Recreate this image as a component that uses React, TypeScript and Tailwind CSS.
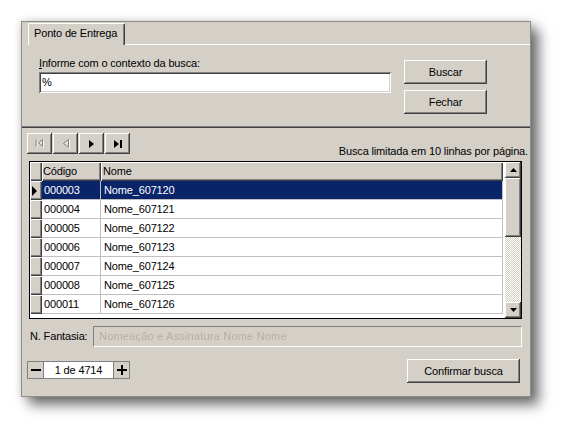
const raised =
  "shadow-[inset_-1px_-1px_#404040,inset_1px_1px_#ffffff,inset_-2px_-2px_#808080,inset_2px_2px_#d4d0c8]";
const sunken =
  "shadow-[inset_1px_1px_#808080,inset_-1px_-1px_#ffffff,inset_2px_2px_#404040,inset_-2px_-2px_#d4d0c8]";
const headCell = "shadow-[inset_1px_1px_#ffffff,inset_-1px_-1px_#404040,inset_-2px_-2px_#808080]";

const rows = [
  ["000003", "Nome_607120"],
  ["000004", "Nome_607121"],
  ["000005", "Nome_607122"],
  ["000006", "Nome_607123"],
  ["000007", "Nome_607124"],
  ["000008", "Nome_607125"],
  ["000011", "Nome_607126"],
];

function NavButton({ children }: { children: React.ReactNode }) {
  return (
    <div className={`w-[25px] h-[21px] bg-[#d4d0c8] flex items-center justify-center ${raised}`}>
      {children}
    </div>
  );
}

function Button({ label, w }: { label: string; w: string }) {
  return (
    <div className={`${w} h-[24px] bg-[#d4d0c8] flex items-center justify-center ${raised}`}>{label}</div>
  );
}

export default function App() {
  return (
    <div className="w-[572px] h-[439px] bg-white pl-[21px] pt-[21px] font-['Liberation_Sans',Arial,sans-serif] text-[11px] leading-[13px] tracking-[-0.15px] text-black">
      <div className="w-[510px] h-[376px] bg-[#d4d0c8] border border-[#8f8c86] flex flex-col shadow-[8px_8px_12px_rgba(0,0,0,0.55),0_0_8px_rgba(0,0,0,0.18)]">
        {/* tab strip */}
        <div className="h-[23px] flex items-end">
          <div className="w-[6px]" />
          <div className="w-[97px] h-[22px] border-l border-t border-r border-white border-r-[#404040] rounded-tl-[2px] rounded-tr-[2px] shadow-[inset_-1px_0_#808080] pl-[5px] pt-[3px]">
            Ponto de Entrega
          </div>
          <div className="flex-1 h-[1px] bg-white" />
        </div>

        {/* search panel */}
        <div className="h-[81px] flex pl-[17px]">
          <div className="w-[352px] pt-[12px]">
            <div>
              <u>I</u>nforme com o contexto da busca:
            </div>
            <div className={`mt-[2px] h-[21px] bg-white pl-[3px] flex items-center ${sunken}`}>%</div>
          </div>
          <div className="ml-[13px] pt-[15px] flex flex-col gap-[6px]">
            <Button label="Buscar" w="w-[83px]" />
            <Button label="Fechar" w="w-[83px]" />
          </div>
        </div>
        <div className="h-[2px] border-t border-b border-t-[#808080] border-b-[#404040]" />

        {/* results */}
        <div className="flex-1 flex flex-col pt-[5px] pl-[5px] pr-[2px]">
          <div className="h-[28px] flex justify-between">
            <div className="flex gap-[1px] items-start">
              <NavButton>
                <svg width="9" height="9" viewBox="0 0 9 9">
                  <g fill="none" stroke="#ffffff">
                    <path d="M2 1.5v7M8.5 1.5L4.5 5l4 3.5z" />
                  </g>
                  <g fill="none" stroke="#808080">
                    <path d="M1 0.5v7M7.5 0.5L3.5 4l4 3.5z" />
                  </g>
                </svg>
              </NavButton>
              <NavButton>
                <svg width="8" height="10" viewBox="0 0 8 10">
                  <path d="M7.5 1.5L2.5 5.5l5 4z" fill="none" stroke="#ffffff" />
                  <path d="M6.5 0.5L1.5 4.5l5 4z" fill="none" stroke="#808080" />
                </svg>
              </NavButton>
              <NavButton>
                <svg width="5" height="8" viewBox="0 0 5 8">
                  <path d="M0 0l5 4-5 4z" fill="#000" />
                </svg>
              </NavButton>
              <NavButton>
                <svg width="8" height="8" viewBox="0 0 8 8">
                  <path d="M0 0l5 4-5 4z" fill="#000" />
                  <rect x="6" y="0" width="2" height="8" fill="#000" />
                </svg>
              </NavButton>
            </div>
            <div className="self-end mb-[3px]">Busca limitada em 10 linhas por página.</div>
          </div>

          {/* grid */}
          <div className="ml-[2px] w-[493px] h-[158px] border border-black flex bg-white">
            <div className="w-[473px] flex flex-col">
              <div className="h-[19px] flex bg-[#d4d0c8]">
                <div className={`w-[12px] ${headCell}`} />
                <div className={`w-[59px] pl-[1px] flex items-center ${headCell}`}>Código</div>
                <div className={`w-[402px] pl-[2px] flex items-center ${headCell}`}>Nome</div>
              </div>
              {rows.map(([code, name], i) => (
                <div key={code} className={`h-[19px] flex ${i === 0 ? "bg-[#0a246a] text-white" : ""}`}>
                  <div className={`w-[12px] bg-[#d4d0c8] flex items-center pl-[2px] ${headCell}`}>
                    {i === 0 && (
                      <svg width="5" height="10" viewBox="0 0 5 10">
                        <path d="M0 0l5 5-5 5z" fill="#000" />
                      </svg>
                    )}
                  </div>
                  <div className="w-[59px] border-r border-b border-[#c0c0c0] pl-[2px] flex items-center">{code}</div>
                  <div className="w-[402px] border-r border-b border-[#c0c0c0] pl-[3px] flex items-center">{name}</div>
                </div>
              ))}
              <div className="flex-1" />
            </div>
            <div className="w-[2px]" />
            <div className="w-[16px] flex flex-col">
              <div className={`h-[16px] bg-[#d4d0c8] flex items-center justify-center ${raised}`}>
                <svg width="7" height="4" viewBox="0 0 7 4">
                  <path d="M3.5 0L7 4H0z" fill="#000" />
                </svg>
              </div>
              <div className={`h-[59px] bg-[#d4d0c8] ${raised}`} />
              <div className="flex-1 bg-[repeating-conic-gradient(#d4d0c8_0%_25%,#ffffff_0%_50%)] bg-[length:2px_2px]" />
              <div className={`h-[16px] bg-[#d4d0c8] flex items-center justify-center ${raised}`}>
                <svg width="7" height="4" viewBox="0 0 7 4">
                  <path d="M0 0h7L3.5 4z" fill="#000" />
                </svg>
              </div>
            </div>
          </div>

          {/* fantasia */}
          <div className="mt-[7px] h-[21px] flex items-center">
            <div className="ml-[3px] w-[63px]">N. Fantasia:</div>
            <div className="w-[429px] h-[21px] border-t border-l border-[#808080] border-b border-r border-b-white border-r-white flex items-center pl-[5px]">
              <span className="text-[#b4b0a8] blur-[0.5px] tracking-[0.2px]">Nomeação e Assinatura Nome Nome</span>
            </div>
          </div>

          {/* footer */}
          <div className="mt-[12px] flex justify-between pr-[8px]">
            <div className="mt-[2px] h-[18px] flex border border-[#808080]">
              <div className="w-[16px] border-r border-[#808080] flex items-center justify-center">
                <svg width="10" height="2" viewBox="0 0 10 2">
                  <rect width="10" height="2" fill="#000" />
                </svg>
              </div>
              <div className="w-[70px] bg-white border-r border-[#808080] flex items-center justify-center">1 de 4714</div>
              <div className="w-[15px] flex items-center justify-center">
                <svg width="10" height="10" viewBox="0 0 10 10">
                  <rect y="4" width="10" height="2" fill="#000" />
                  <rect x="4" width="2" height="10" fill="#000" />
                </svg>
              </div>
            </div>
            <Button label="Confirmar busca" w="w-[113px]" />
          </div>
        </div>
      </div>
    </div>
  );
}
